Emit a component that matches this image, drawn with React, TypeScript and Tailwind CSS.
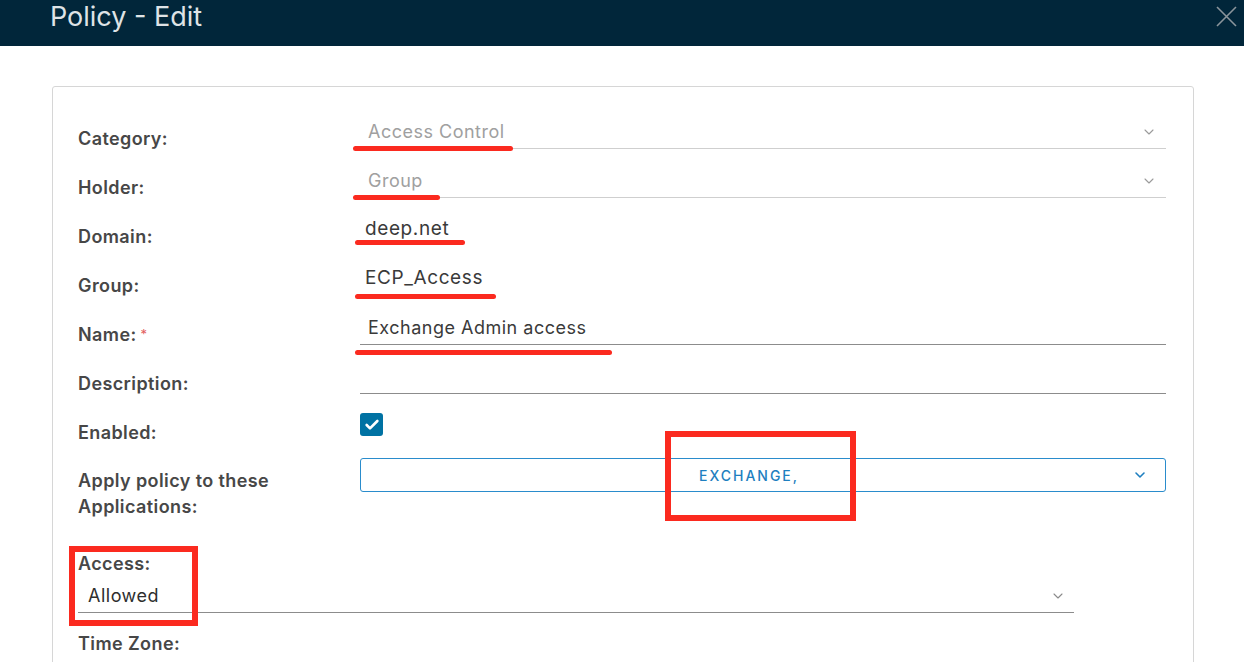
import { ChevronDown, Check } from 'lucide-react';
import type { ReactNode } from 'react';

const font = { fontFamily: 'Inter, "Open Sans", Arial, sans-serif' };

function Mark({ w, left = 0, top }: { w: number; left?: number; top: number }) {
  return (
    <span
      className="absolute h-[5px] rounded-full bg-[#fb2a1f]"
      style={{ width: w, left, top }}
    />
  );
}

function Row({ label, children, required }: { label: string; children: ReactNode; required?: boolean }) {
  return (
    <div className="flex h-[49px]">
      <div className="flex w-[282px] shrink-0 items-center text-[18px] font-semibold tracking-[0.4px] text-[#474747]">
        {label}
        {required && <span className="ml-1 text-[13px] font-normal text-[#e25d5d]">*</span>}
      </div>
      <div className="relative flex-1 pr-[27px]">{children}</div>
    </div>
  );
}

function Select({ value, mark }: { value: string; mark: number }) {
  return (
    <div className="relative mt-px flex h-[34px] items-center justify-between border-b border-[#cfcfcf] pl-2 pr-[9px]">
      <span className="text-[18px] tracking-[0.5px] text-[#a0a0a0]">{value}</span>
      <ChevronDown className="h-4 w-4 text-[#9a9a9a]" strokeWidth={1.6} />
      <Mark w={mark} left={-7} top={31} />
    </div>
  );
}

function Plain({ value, mark, markTop }: { value: string; mark: number; markTop: number }) {
  return (
    <div className="relative mt-[-1px] flex h-[36px] items-center pl-[5px]">
      <span className="text-[19px] tracking-[0.6px] text-[#3a3a3a]">{value}</span>
      <Mark w={mark} left={-5} top={markTop} />
    </div>
  );
}

export default function App() {
  return (
    <div className="relative h-[662px] w-[1244px] overflow-hidden bg-white" style={font}>
      <header className="flex h-[46px] items-start justify-between bg-[#01263a] pl-[50px] pr-[7px]">
        <h1 className="mt-[1px] text-[27px] leading-[32px] font-normal text-[#dfe3e6]">Policy - Edit</h1>
        <svg className="mt-[6px] h-[21px] w-[21px]" viewBox="0 0 21 21" fill="none" stroke="#8b959b" strokeWidth="1.6">
          <path d="M1 1 L20 20 M20 1 L1 20" />
        </svg>
      </header>

      <div className="ml-[52px] mt-[40px] h-[600px] w-[1142px] rounded-[3px] border border-[#d6d6d6] pl-[25px] pt-[27px]">
        <Row label="Category:">
          <Select value="Access Control" mark={160} />
        </Row>
        <Row label="Holder:">
          <Select value="Group" mark={87} />
        </Row>
        <Row label="Domain:">
          <Plain value="deep.net" mark={110} markTop={29} />
        </Row>
        <Row label="Group:">
          <Plain value="ECP_Access" mark={141} markTop={34} />
        </Row>
        <Row label="Name:" required>
          <div className="relative mt-px flex h-[34px] items-center border-b border-[#8c8c8c] pl-2">
            <span className="text-[18px] tracking-[0.5px] text-[#3a3a3a]">Exchange Admin access</span>
            <Mark w={257} left={-5} top={39} />
          </div>
        </Row>
        <Row label="Description:">
          <div className="mt-px h-[34px] border-b border-[#8c8c8c]" />
        </Row>
        <Row label="Enabled:">
          <div className="mt-[5px] flex h-[23px] w-[23px] items-center justify-center rounded-[3px] bg-[#0072a3]">
            <Check className="h-[16px] w-[16px] text-white" strokeWidth={4} />
          </div>
        </Row>

        <div className="flex h-[92px]">
          <div className="w-[282px] shrink-0 pt-[11px] text-[18px] leading-[26px] font-semibold tracking-[0.4px] text-[#474747]">
            Apply policy to these
            <br />
            Applications:
          </div>
          <div className="relative flex-1 pr-[27px]">
            <div className="mt-px flex h-[34px] items-center justify-between rounded-[3px] border-[1.5px] border-[#2a8ccc]">
              <span className="pl-[338px] text-[14px] font-medium tracking-[2px] text-[#1e7fc0]">
                EXCHANGE,
              </span>
              <ChevronDown className="mr-[17px] h-4 w-4 text-[#1e7fc0]" strokeWidth={2.4} />
            </div>
            <span className="absolute left-[305px] top-[-26px] h-[90px] w-[191px] border-[6px] border-[#fb2a1f]" />
          </div>
        </div>

        <div className="relative w-[996px]">
          <div className="h-[30px] pt-[3px] text-[18px] leading-[24px] font-semibold tracking-[0.4px] text-[#474747]">Access:</div>
          <div className="flex h-[34px] items-center justify-between border-b border-[#8c8c8c] pl-[10px] pr-[8px]">
            <span className="text-[18px] tracking-[0.5px] text-[#2e2e2e]">Allowed</span>
            <ChevronDown className="h-4 w-4 text-[#8a8a8a]" strokeWidth={1.6} />
          </div>
          <div className="pt-[19px] text-[18px] leading-[24px] font-semibold tracking-[0.4px] text-[#474747]">Time Zone:</div>
          <span className="absolute left-[-9px] top-[-3px] h-[80px] w-[129px] border-[6px] border-[#fb2a1f]" />
        </div>
      </div>
    </div>
  );
}
